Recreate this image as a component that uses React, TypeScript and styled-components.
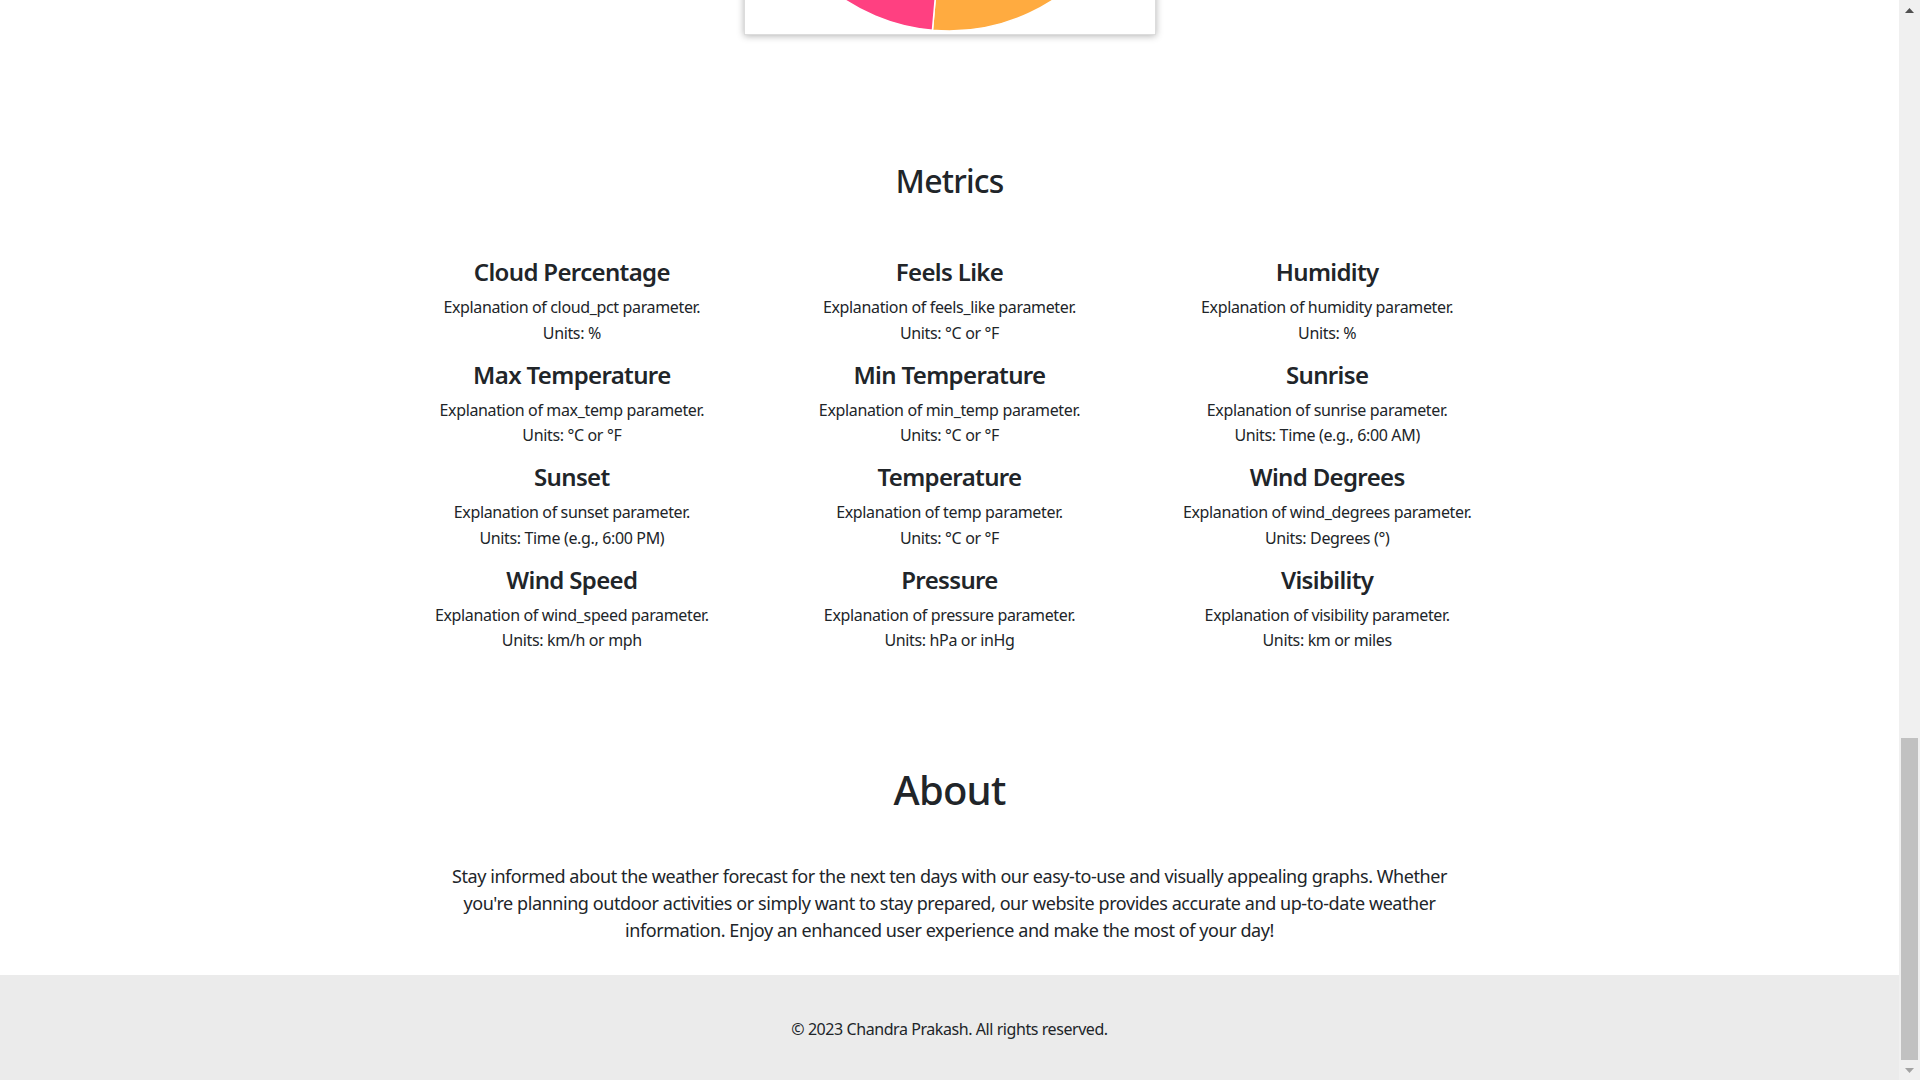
import React from "react";
import styled, { createGlobalStyle } from "styled-components";

const metrics = [
  { title: "Cloud Percentage", param: "cloud_pct", units: "%" },
  { title: "Feels Like", param: "feels_like", units: "°C or °F" },
  { title: "Humidity", param: "humidity", units: "%" },
  { title: "Max Temperature", param: "max_temp", units: "°C or °F" },
  { title: "Min Temperature", param: "min_temp", units: "°C or °F" },
  { title: "Sunrise", param: "sunrise", units: "Time (e.g., 6:00 AM)" },
  { title: "Sunset", param: "sunset", units: "Time (e.g., 6:00 PM)" },
  { title: "Temperature", param: "temp", units: "°C or °F" },
  { title: "Wind Degrees", param: "wind_degrees", units: "Degrees (°)" },
  { title: "Wind Speed", param: "wind_speed", units: "km/h or mph" },
  { title: "Pressure", param: "pressure", units: "hPa or inHg" },
  { title: "Visibility", param: "visibility", units: "km or miles" },
];

// clockwise from 12 o'clock, degrees
const slices = [
  { from: 0, to: 62, color: "#40c4ff" },
  { from: 62, to: 125, color: "#69f0ae" },
  { from: 125, to: 185, color: "#ffab40" },
  { from: 185, to: 258, color: "#ff4081" },
  { from: 258, to: 312, color: "#e040fb" },
  { from: 312, to: 360, color: "#ffd740" },
];

function slicePath(cx: number, cy: number, r: number, a0: number, a1: number) {
  const pt = (a: number) => {
    const rad = (a * Math.PI) / 180;
    return `${(cx + r * Math.sin(rad)).toFixed(2)},${(cy - r * Math.cos(rad)).toFixed(2)}`;
  };
  const large = a1 - a0 > 180 ? 1 : 0;
  return `M${cx},${cy} L${pt(a0)} A${r},${r} 0 ${large} 1 ${pt(a1)} Z`;
}

const GlobalStyle = createGlobalStyle`
  body {
    margin: 0;
    background: #fff;
    color: #212529;
    font-family: "Segoe UI", "Noto Sans", "Open Sans", sans-serif;
    font-size: 16px;
    line-height: 1.5;
  }
  h2, h4, p {
    margin: 0;
  }
`;

function WeatherChart() {
  return (
    <ChartStrip>
      <ChartCard>
        <svg width="408" height="400" viewBox="0 0 408 400">
          {slices.map((s) => (
            <path
              key={s.color}
              d={slicePath(204, 209, 190, s.from, s.to)}
              fill={s.color}
              stroke="#fff"
              strokeWidth="1.5"
            />
          ))}
        </svg>
      </ChartCard>
    </ChartStrip>
  );
}

function Metrics() {
  return (
    <MetricsSection>
      <SectionTitle>Metrics</SectionTitle>
      <MetricGrid>
        {metrics.map((m) => (
          <Metric key={m.param}>
            <MetricTitle>{m.title}</MetricTitle>
            <MetricText>Explanation of {m.param} parameter.</MetricText>
            <MetricText>Units: {m.units}</MetricText>
          </Metric>
        ))}
      </MetricGrid>
    </MetricsSection>
  );
}

function About() {
  return (
    <AboutSection>
      <AboutTitle>About</AboutTitle>
      <AboutText>
        Stay informed about the weather forecast for the next ten days with our
        easy-to-use and visually appealing graphs. Whether you're planning
        outdoor activities or simply want to stay prepared, our website provides
        accurate and up-to-date weather information. Enjoy an enhanced user
        experience and make the most of your day!
      </AboutText>
    </AboutSection>
  );
}

function ScrollBar() {
  return (
    <Rail>
      <RailButton>
        <svg width="9" height="5" viewBox="0 0 9 5">
          <polygon points="0,5 4.5,0 9,5" fill="#505050" />
        </svg>
      </RailButton>
      <RailTrack>
        <Thumb />
      </RailTrack>
      <RailButton>
        <svg width="9" height="5" viewBox="0 0 9 5">
          <polygon points="0,0 9,0 4.5,5" fill="#a3a3a3" />
        </svg>
      </RailButton>
    </Rail>
  );
}

export default function App() {
  return (
    <>
      <GlobalStyle />
      <Window>
        <Page>
          <Main>
            <WeatherChart />
            <Metrics />
            <About />
          </Main>
          <Footer>
            <p>© 2023 Chandra Prakash. All rights reserved.</p>
          </Footer>
        </Page>
        <ScrollBar />
      </Window>
    </>
  );
}

const Window = styled.div`
  display: flex;
  min-height: 100vh;
`;

const Page = styled.div`
  flex: 1;
  min-width: 0;
  display: flex;
  flex-direction: column;
`;

const Main = styled.main`
  display: flex;
  flex-direction: column;
  align-items: center;
`;

const Rail = styled.div`
  flex: none;
  width: 21px;
  background: #f0f0f0;
  display: flex;
  flex-direction: column;
`;

const RailButton = styled.div`
  height: 21px;
  display: flex;
  align-items: center;
  justify-content: center;
`;

const RailTrack = styled.div`
  flex: 1;
  display: flex;
  flex-direction: column;
  justify-content: flex-end;
  padding: 0 2px;
`;

const Thumb = styled.div`
  height: 322px;
  background: #c1c1c1;
`;

const ChartStrip = styled.div`
  align-self: stretch;
  height: 44px;
  padding-bottom: 9px;
  box-sizing: border-box;
  overflow: hidden;
  display: flex;
  justify-content: center;
  align-items: flex-end;
`;

const ChartCard = styled.div`
  flex: none;
  width: 410px;
  height: 402px;
  border: 1px solid #dcdcdc;
  background: #fff;
  box-shadow: 0 1px 7px rgba(0, 0, 0, 0.3);
  display: flex;
`;

const MetricsSection = styled.section`
  padding-top: 118px;
  display: flex;
  flex-direction: column;
  align-items: center;
`;

const SectionTitle = styled.h2`
  font-size: 32px;
  font-weight: 500;
  line-height: 1.2;
  letter-spacing: -0.025em;
  margin-bottom: 58px;
`;

const MetricGrid = styled.div`
  width: 1133px;
  display: grid;
  grid-template-columns: repeat(3, 1fr);
  row-gap: 14.5px;
  text-align: center;
`;

const Metric = styled.div`
  display: flex;
  flex-direction: column;
  align-items: center;
`;

const MetricTitle = styled.h4`
  font-size: 24px;
  font-weight: 600;
  line-height: 1.2;
  letter-spacing: -0.027em;
  margin-bottom: 8px;
`;

const MetricText = styled.p`
  font-size: 16px;
  line-height: 1.6;
  letter-spacing: -0.022em;
`;

const AboutSection = styled.section`
  padding-top: 112px;
  padding-bottom: 31px;
  display: flex;
  flex-direction: column;
  align-items: center;
`;

const AboutTitle = styled.h2`
  font-size: 40px;
  font-weight: 500;
  line-height: 1.2;
  letter-spacing: -0.02em;
  margin-bottom: 49.5px;
`;

const AboutText = styled.p`
  max-width: 1040px;
  font-size: 18px;
  line-height: 1.5;
  letter-spacing: -0.024em;
  text-align: center;
`;

const Footer = styled.footer`
  background: #ebebeb;
  padding: 42px 0 40px;
  text-align: center;
  font-size: 16px;
  line-height: 1.5;
  letter-spacing: -0.027em;
`;
